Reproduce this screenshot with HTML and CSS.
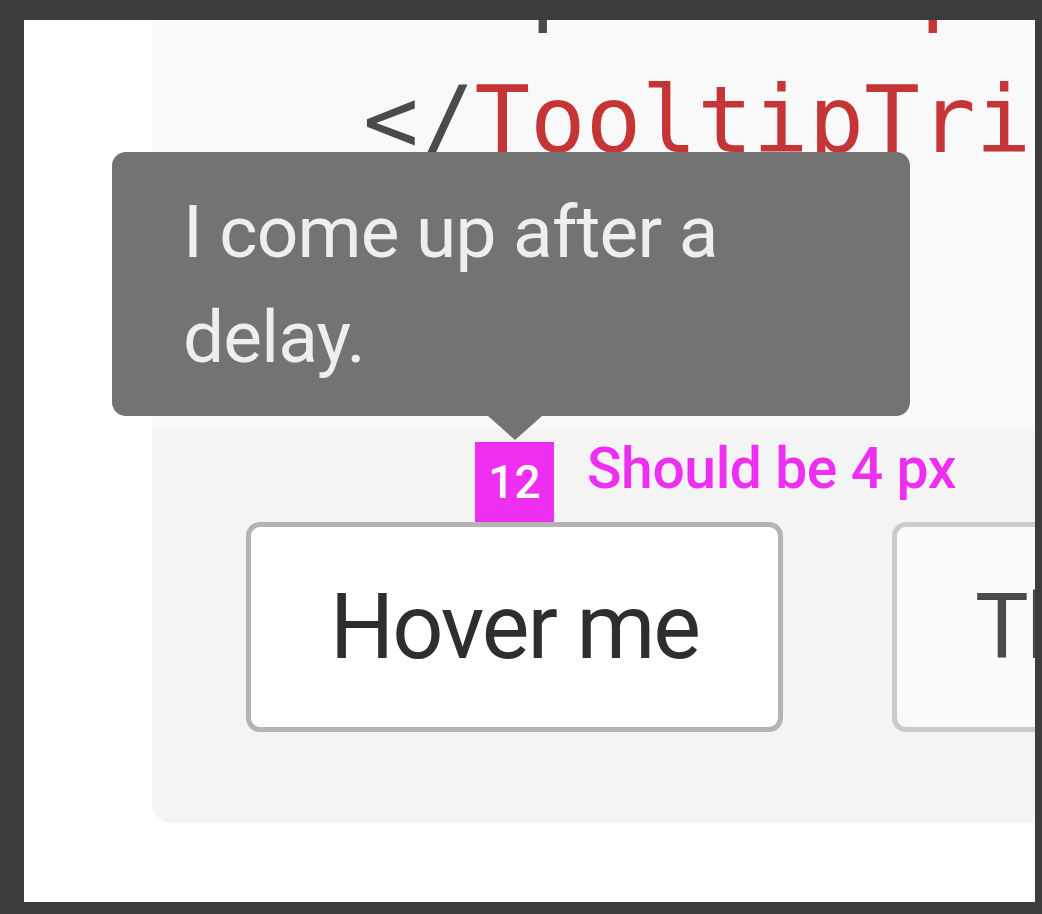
FILE: index.html
```html
<!DOCTYPE html>
<html lang="en">
<head>
  <meta charset="UTF-8">
  <meta name="viewport" content="width=device-width, initial-scale=1.0">
  <title>Tooltip delay spec</title>
  <link rel="stylesheet" href="styles.css">
</head>
<body>
  <div class="frame">
    <div class="example">
      <div class="code">
<pre><span class="punct">   p</span>      <span class="tag">p</span>
<span class="punct">&lt;/</span><span class="tag">TooltipTrigger</span><span class="punct">&gt;</span></pre>
      </div>

      <div class="preview">
        <div class="trigger">
          <div class="tooltip">I come up after a delay.</div>
          <div class="marker">12</div>
          <div class="note">Should be 4 px</div>
          <button class="btn">Hover me</button>
        </div>
        <button class="btn btn-second">This one has no delay</button>
      </div>
    </div>
  </div>
</body>
</html>
```

FILE: styles.css
```css
body {
  margin: 0;
  background-color: #3c3c3c;
}

.frame {
  margin: 20px 7px 0 24px;
  height: 882px;
  padding-left: 128px;
  background: #fff;
  overflow: hidden;
}

.example {
  height: 803px;
  background: #f4f4f4;
  border-bottom-left-radius: 20px;
}

.code {
  height: 409px;
  background: #f9f9f9;
  overflow: hidden;
}

.code pre {
  margin: -107px 0 0 0;
  padding-left: 211px;
  font-family: "DejaVu Sans Mono", monospace;
  font-size: 92.5px;
  line-height: 138px;
  white-space: pre;
}

.punct {
  color: #4b4b4b;
}

.tag {
  color: #c53535;
}

.preview {
  display: flex;
  gap: 109px;
  padding: 93px 0 0 94px;
}

.trigger {
  position: relative;
  flex-shrink: 0;
}

.btn {
  display: block;
  flex-shrink: 0;
  width: 537px;
  height: 210px;
  box-sizing: border-box;
  margin: 0;
  padding: 0;
  border: 5px solid #b4b4b4;
  border-radius: 14px;
  background: #fff;
  color: #2e2e2e;
  font-family: Roboto, sans-serif;
  font-size: 90px;
  letter-spacing: -2px;
  text-align: center;
  white-space: nowrap;
}

.btn-second {
  width: auto;
  padding: 0 78px;
  border-color: #cbcbcb;
  background: #fafafa;
  color: #4a4a4a;
  text-align: left;
}

.tooltip {
  position: absolute;
  left: -134px;
  bottom: calc(100% + 106px);
  width: 798px;
  height: 264px;
  box-sizing: border-box;
  padding: 28px 71px 0 71px;
  background: #737373;
  border-radius: 14px;
  color: #eeeeee;
  font-family: Roboto, sans-serif;
  font-size: 73px;
  line-height: 105px;
  letter-spacing: -0.8px;
}

.tooltip::after {
  content: "";
  position: absolute;
  top: 100%;
  left: 376px;
  border-left: 27px solid transparent;
  border-right: 27px solid transparent;
  border-top: 24px solid #737373;
}

.marker {
  position: absolute;
  left: 229px;
  top: -80px;
  width: 79px;
  height: 80px;
  display: flex;
  align-items: center;
  justify-content: center;
  background: #ee2ef0;
  color: #fff;
  font-family: Roboto, sans-serif;
  font-weight: 500;
  font-size: 46px;
  z-index: 2;
}

.note {
  position: absolute;
  left: 341px;
  top: -82px;
  color: #ee2ef0;
  font-family: Roboto, sans-serif;
  font-weight: 500;
  font-size: 57px;
  line-height: 57px;
  letter-spacing: -0.4px;
  white-space: nowrap;
}
```
